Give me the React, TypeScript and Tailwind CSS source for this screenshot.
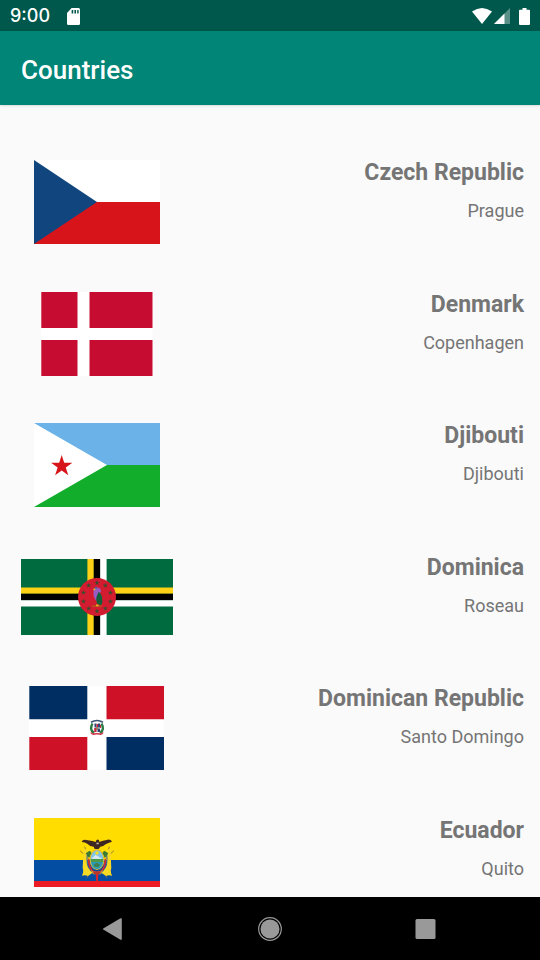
import type { ReactNode } from 'react';

function starPoints(cx: number, cy: number, r: number) {
  return Array.from({ length: 10 }, (_, i) => {
    const radius = i % 2 ? r * 0.382 : r;
    const a = (Math.PI / 5) * i - Math.PI / 2;
    return `${(cx + radius * Math.cos(a)).toFixed(2)},${(cy + radius * Math.sin(a)).toFixed(2)}`;
  }).join(' ');
}

type FlagProps = { label: string; width: number; height: number; children: ReactNode };

function Flag({ label, width, height, children }: FlagProps) {
  return (
    <svg role="img" aria-label={label} width={width} height={height} viewBox={`0 0 ${width} ${height}`}>
      {children}
    </svg>
  );
}

function CzechFlag() {
  return (
    <Flag label="Flag of Czech Republic" width={126} height={84}>
      <path fill="#fff" d="M0 0h126v42H0z" />
      <path fill="#d7141a" d="M0 42h126v42H0z" />
      <path fill="#11457e" d="M0 0l63 42L0 84z" />
    </Flag>
  );
}

function DenmarkFlag() {
  return (
    <Flag label="Flag of Denmark" width={112} height={84}>
      <path fill="#fff" d="M0 0h111.500v84H0z" />
      <path fill="#c60c30" d="M.3 0h36.200v36H.3zM48.500 0h63v36h-63zM.3 48h36.200v36H.3zM48.500 48h63v36h-63z" />
    </Flag>
  );
}

function DjiboutiFlag() {
  return (
    <Flag label="Flag of Djibouti" width={126} height={84}>
      <path fill="#6ab2e7" d="M0 0h126v42H0z" />
      <path fill="#12ad2b" d="M0 42h126v42H0z" />
      <path fill="#fff" d="M0 0l73 42L0 84z" />
      <polygon fill="#d7141a" points={starPoints(27.7, 43.3, 11.2)} />
    </Flag>
  );
}

function DominicaFlag() {
  return (
    <Flag label="Flag of Dominica" width={152} height={76}>
      <path fill="#006b3f" d="M0 0h152v76H0z" />
      <path fill="#fcd116" d="M66.4 0h6.4v76h-6.4zM0 28.4h152v6.4H0z" />
      <path fill="#000" d="M72.8 0h6.4v76h-6.4zM0 34.8h152v6.4H0z" />
      <path fill="#fff" d="M79.2 0h6.4v76h-6.4zM0 41.2h152v6.4H0z" />
      <circle cx="76" cy="38" r="19" fill="#d41c30" />
      {Array.from({ length: 10 }, (_, i) => (
        <polygon
          key={i}
          fill="#1c5a35"
          stroke="#6d3a2c"
          strokeWidth="0.4"
          points={starPoints(
            76 + 14.2 * Math.sin((i * Math.PI) / 5),
            38 - 14.2 * Math.cos((i * Math.PI) / 5),
            2.3,
          )}
        />
      ))}
      <path fill="#9a5bc4" d="M73 29.500q2-1.700 4-.7l2.500 1 .5 3-3 3-1 6.500q-3.500-2.500-3.500-7.500 0-3 .5-5.300z" />
      <path fill="#14603a" d="M77.500 33q2.500 1 3.500 5 1 5-.5 8l-3.500-.5q-2.500-3-1.500-7.500z" />
      <path fill="#4b6a9a" d="M73.500 28.500l2-.7 1 1.500-2 1z" />
      <path fill="#b0571c" d="M71 46.300h10v1.500H71z" />
      <path fill="#e3b71e" d="M72.300 29.800h2v1.500h-2zM75 45.500h2.500v1.800H75z" />
    </Flag>
  );
}

function DominicanRepublicFlag() {
  return (
    <Flag label="Flag of Dominican Republic" width={136} height={84}>
      <path fill="#fff" d="M0 0h135v84H0z" />
      <path fill="#002d62" d="M.3 0h58v33.300H.3zM77.500 51h57.500v33H77.500z" />
      <path fill="#ce1126" d="M77.500 0h57.500v33.300H77.500zM.3 51h58v33H.3z" />
      <path fill="none" stroke="#3c5577" strokeWidth="1.600" d="M62 36.300q6-3.500 12 0" />
      <path fill="none" stroke="#2c7a46" strokeWidth="2.400" d="M63.500 37.500q-3.500 6 1.500 9.500M72.500 37.500q3.500 6-1.500 9.500" />
      <path fill="#2d4577" d="M65.500 37.500h2v4h-2zM69 37.500h2v4h-2zM68.500 42.500H71V46h-2.500z" />
      <path fill="#c7283c" d="M65.200 42h2.400v4h-2.400zM67.500 38H69v3h-1.500zM71 39h1v3h-1z" />
      <path fill="#8d7b55" d="M67.200 41h1.700v3h-1.700z" />
      <path fill="none" stroke="#cf3345" strokeWidth="1.600" d="M62 46.500q1 2 3 1.600 3-.8 6 0 2 .4 3-1.600" />
    </Flag>
  );
}

function EcuadorFlag() {
  return (
    <Flag label="Flag of Ecuador" width={126} height={84}>
      <path fill="#ffdd00" d="M0 0h126v42H0z" />
      <path fill="#034ea2" d="M0 42h126v21H0z" />
      <path fill="#ed1c24" d="M0 63h126v21H0z" />
      <g transform="translate(-14 -8) scale(.3333)">
        <path
          fill="none"
          stroke="#8a6d46"
          strokeWidth="2.500"
          d="M194 110l8 30M268 110l-8 30M180 122l18 16M282 122l-18 16M208 180l-22 14M254 180l22 14M212 186l-12 18M250 186l12 18"
        />
        <path fill="#f8da24" d="M190 114l14 8-2 34q0 20 16 32l-14 10q-10-4-18 0 6-14 2-24 2-28 2-60z" />
        <path fill="#f8da24" d="M272 114l-14 8 2 34q0 20-16 32l14 10q10-4 18 0-6-14-2-24-2-28-2-60z" />
        <path fill="none" stroke="#2c58a0" strokeWidth="3" d="M202 132q-4 34 8 46M260 132q4 34-8 46" />
        <path fill="none" stroke="#d92b2e" strokeWidth="5" d="M206 146q0 24 11 37l14 6 14-6q11-13 11-37" />
        <path fill="#397c32" d="M197 130l12-8 7 8-9 14zM265 130l-12-8-7 8 9 14z" />
        <ellipse cx="231" cy="149" rx="22" ry="31" fill="#e2b92b" />
        <ellipse cx="231" cy="149" rx="19" ry="28" fill="#82c4e6" />
        <path fill="#dce9ee" d="M214 146l12-11 7 3 13 9z" />
        <path fill="#4c9a4a" d="M212 147h38l-1 9h-36z" />
        <path fill="#2a9bb3" d="M213 156h36q-3 20-18 21-15-1-18-21z" />
        <path fill="#427d4b" d="M221 164l10-6 9 6-4 6h-12z" />
        <circle cx="231" cy="129" r="5" fill="#ffdf24" />
        <path fill="#caa13b" d="M213 181q18 10 36 0l-6 12h-24z" />
        <path fill="#b8382d" d="M218 184h26l-4 8h-18z" />
        <path fill="#d7242b" d="M227 192h8l-1 24h-5z" />
        <path
          fill="#3e2723"
          d="M185 96q2-7 10-7l22 4 10 3 2-5q5-5 8 0l1 5 8-3 17-4q10-1 13 6-12 3-19 8-7 7-16 7l-5 7h-12l-3-7q-12 0-18-8-8-6-18-6z"
        />
        <path fill="#c8c2b3" d="M229 98h8l-2 5h-5z" />
      </g>
    </Flag>
  );
}

const countries = [
  { name: 'Czech Republic', capital: 'Prague', flag: <CzechFlag /> },
  { name: 'Denmark', capital: 'Copenhagen', flag: <DenmarkFlag /> },
  { name: 'Djibouti', capital: 'Djibouti', flag: <DjiboutiFlag /> },
  { name: 'Dominica', capital: 'Roseau', flag: <DominicaFlag /> },
  { name: 'Dominican Republic', capital: 'Santo Domingo', flag: <DominicanRepublicFlag /> },
  { name: 'Ecuador', capital: 'Quito', flag: <EcuadorFlag /> },
];

function StatusBar() {
  return (
    <div className="flex h-[31px] shrink-0 items-center bg-[#00574b] px-[10px] pt-px text-white">
      <time className="w-10 font-['Inter',sans-serif] text-[18px] leading-6 font-medium">9:00</time>
      <svg className="ml-[17px]" width="13" height="17" viewBox="0 0 14 17" preserveAspectRatio="none" aria-label="SD card">
        <path fill="#fff" d="M5 0h7.500Q14 0 14 1.500v14q0 1.500-1.500 1.500h-11Q0 17 0 15.500V5z" />
        <path fill="#00574b" d="M5 2h1.700v3.500H5zM8 2h1.700v3.500H8zM11 2h1.500v3.500H11z" />
      </svg>
      <div className="ml-auto flex items-center">
        <svg width="20" height="16" viewBox="0 0 20 16" aria-label="Wi-Fi">
          <path fill="#fff" d="M0 3.500Q10-3.500 20 3.500L10 16z" />
        </svg>
        <svg className="ml-[2px]" width="16" height="16" viewBox="0 0 16 16" aria-label="Mobile signal">
          <path fill="#fff" fillOpacity=".35" d="M0 16L16 0v16z" />
          <path fill="#fff" d="M0 16L10.500 5.500V16z" />
        </svg>
        <svg className="ml-[9px]" width="11" height="17" viewBox="0 0 11 17" aria-label="Battery">
          <path fill="#fff" d="M3.500 0h4v1.700H10q1 0 1 1V16q0 1-1 1H1q-1 0-1-1V2.700q0-1 1-1h2.500z" />
        </svg>
      </div>
    </div>
  );
}

function NavigationBar() {
  return (
    <nav className="grid h-[63px] shrink-0 grid-cols-3 bg-black px-9" aria-label="System navigation">
      <button type="button" aria-label="Back" className="flex items-center justify-center">
        <svg width="26" height="26" viewBox="0 0 26 26">
          <path fill="#999" d="M2.200 12.400L19.500 2.300q1.300-.5 1.300.8v19.800q0 1.300-1.300.8L2.200 13.600q-.8-.6 0-1.200z" />
        </svg>
      </button>
      <button type="button" aria-label="Home" className="flex items-center justify-center">
        <svg width="26" height="26" viewBox="0 0 26 26">
          <circle cx="13" cy="13" r="11.300" fill="none" stroke="#999" strokeWidth="1.200" />
          <circle cx="13" cy="13" r="9.500" fill="#999" />
        </svg>
      </button>
      <button type="button" aria-label="Recent apps" className="flex items-center justify-center">
        <svg width="26" height="26" viewBox="0 0 26 26">
          <rect x="2.500" y="3" width="20" height="20" rx="1.500" fill="#999" />
        </svg>
      </button>
    </nav>
  );
}

export default function App() {
  return (
    <div className="flex h-screen flex-col bg-[#fafafa] font-['Roboto',sans-serif] text-[#757575]">
      <StatusBar />
      <header className="z-10 flex h-[74px] shrink-0 items-center bg-[#008577] px-[21px] pt-1 shadow-sm">
        <h1 className="text-[26px] leading-8 font-medium text-white">Countries</h1>
      </header>
      <main className="flex min-h-0 flex-1 flex-col pt-8 pb-[10px]">
        <div className="min-h-0 flex-1 overflow-hidden">
          <ul className="grid h-[789px] grid-rows-6">
            {countries.map((country) => (
              <li key={country.name} className="flex items-start pt-[23px] pr-4 pl-[21px]">
                <div className="flex h-[84px] w-[152px] shrink-0 items-center justify-center">{country.flag}</div>
                <div className="flex-1 text-right">
                  <h2 className="-mt-px text-[23px] leading-7 font-bold">{country.name}</h2>
                  <p className="mt-3 text-[18px] leading-6">{country.capital}</p>
                </div>
              </li>
            ))}
          </ul>
        </div>
      </main>
      <NavigationBar />
    </div>
  );
}
